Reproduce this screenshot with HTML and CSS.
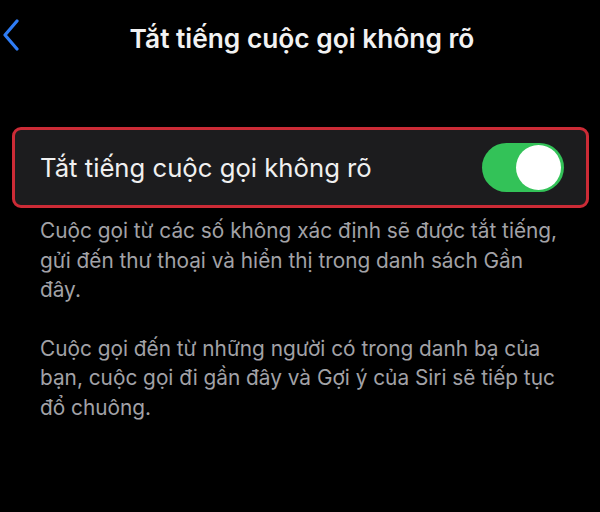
FILE: index.html
```html
<!DOCTYPE html>
<html lang="vi">
<head>
<meta charset="utf-8">
<link rel="stylesheet" href="styles.css">
</head>
<body>
<div class="screen">
  <header class="nav">
    <span class="back">
      <svg width="18" height="32" viewBox="0 0 18 32"><path d="M15 2 L3 16 L15 30" fill="none" stroke="#2f7df6" stroke-width="3.2" stroke-linecap="round" stroke-linejoin="round"/></svg>
    </span>
    <h1 class="title">Tắt tiếng cuộc gọi không rõ</h1>
  </header>
  <main class="content">
    <div class="cell">
      <span class="cell-label">Tắt tiếng cuộc gọi không rõ</span>
      <span class="toggle"><span class="knob"></span></span>
    </div>
    <div class="footer">
      <p>Cuộc gọi từ các số không xác định sẽ được tắt tiếng, gửi đến thư thoại và hiển thị trong danh sách Gần đây.</p>
      <p>Cuộc gọi đến từ những người có trong danh bạ của bạn, cuộc gọi đi gần đây và Gợi ý của Siri sẽ tiếp tục đổ chuông.</p>
    </div>
  </main>
</div>
</body>
</html>
```
FILE: styles.css
```css
html, body {
  margin: 0;
  padding: 0;
  background: #000;
}
.screen {
  width: 600px;
  height: 512px;
  background: #000;
  font-family: Inter, "Noto Sans", sans-serif;
  color: #fff;
  overflow: hidden;
}
.nav {
  position: relative;
  height: 76px;
  display: flex;
  align-items: center;
  justify-content: center;
  padding-left: 4px;
}
.back {
  position: absolute;
  left: 2px;
  top: 19px;
  display: block;
  line-height: 0;
}
.title {
  margin: 0;
  font-size: 26.3px;
  font-weight: 600;
  color: #f2f2f2;
}
.content {
  padding: 51px 11px 0 12px;
}
.cell {
  height: 75px;
  border: 3px solid #cc2b36;
  border-radius: 9px;
  background: #1c1c1e;
  display: flex;
  align-items: center;
  justify-content: space-between;
  padding: 0 22px 0 25px;
}
.cell-label {
  font-size: 25.7px;
  color: #f0f0f0;
}
.toggle {
  width: 82px;
  height: 49px;
  border-radius: 25px;
  background: #33c258;
  position: relative;
  display: block;
}
.knob {
  position: absolute;
  right: 3px;
  top: 2px;
  width: 45px;
  height: 45px;
  border-radius: 50%;
  background: #fff;
}
.footer {
  padding: 8px 20px 0 28px;
  color: #a2a2a7;
  font-size: 20.8px;
  line-height: 29.5px;
}
.footer p {
  margin: 0 0 29px;
}
```
